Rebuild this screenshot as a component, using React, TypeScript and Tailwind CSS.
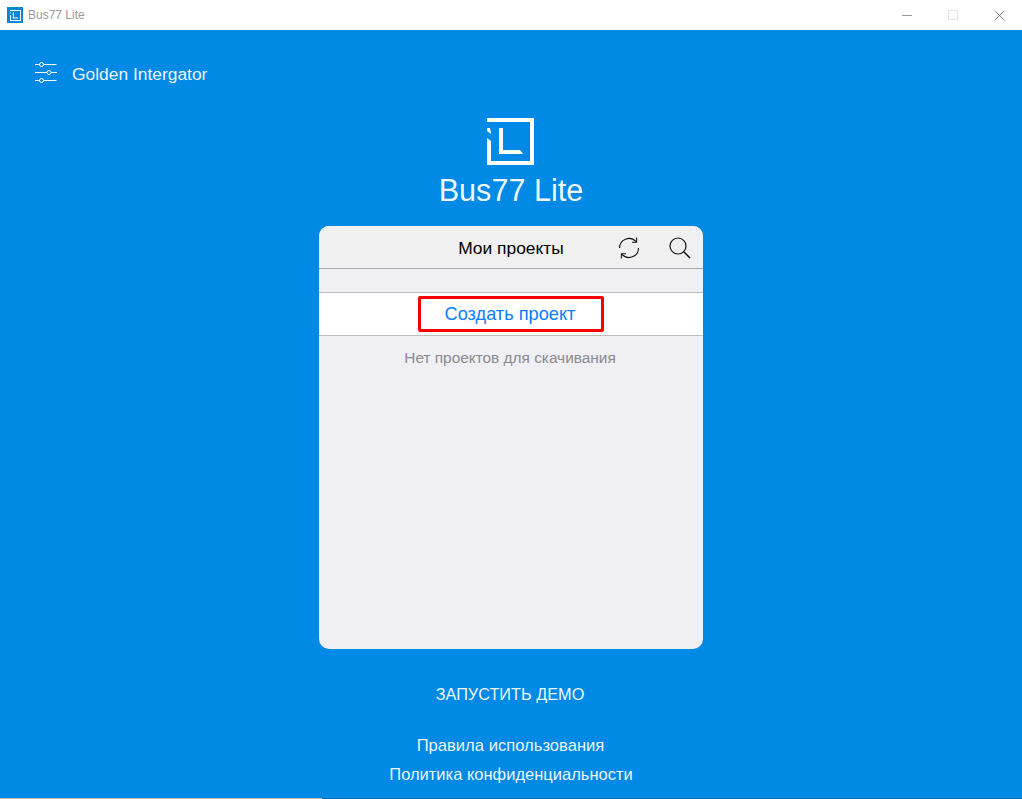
import React from 'react';

const sans = { fontFamily: '"Liberation Sans", Arial, sans-serif' };

// app mark: square outline, notched on the left, with the L inside
const Logo = ({ size }: { size: number }) => (
  <svg width={size} height={size} viewBox="0 0 47 47" fill="white">
    <path d="M0 0h47v47H0V20l4 3v20h39V4H0z" />
    <path d="M12 10h4v22h17l3 4H12z" />
    <path d="M0 10h3l1 5v1L0 13z" />
  </svg>
);

const Sliders = () => (
  <svg width="22" height="22" viewBox="0 0 22 22" fill="none" stroke="white" strokeWidth="1" className="overflow-visible">
    <path d="M0 1.5h4.5M8.5 1.5h13M0 9.5h12M16 9.5h6M0 17.5h4.5M8.5 17.5h13" />
    <circle cx="6.5" cy="1.5" r="2" />
    <circle cx="14" cy="9.5" r="2" />
    <circle cx="6.5" cy="17.5" r="2" />
  </svg>
);

const Refresh = () => (
  <svg width="22" height="24" viewBox="0 0 22 24" fill="none" stroke="#111" strokeWidth="1.1">
    <path d="M1.5 12A9.5 9.5 0 0 1 18 5.6" />
    <path d="M18.6 1.6v4.6h-4.6" />
    <path d="M20.5 12A9.5 9.5 0 0 1 4 18.4" />
    <path d="M3.4 22.4v-4.6h4.6" />
  </svg>
);

const Search = () => (
  <svg width="22" height="22" viewBox="0 0 22 22" fill="none" stroke="#111" strokeWidth="1.2">
    <circle cx="9" cy="9" r="8" />
    <path d="M14.8 14.8L21 21" strokeWidth="1.5" />
  </svg>
);

export default function App() {
  return (
    <div className="flex h-[799px] w-[1022px] flex-col overflow-hidden bg-[#008ae6]" style={sans}>
      {/* window title bar */}
      <div className="flex h-[30px] shrink-0 items-center justify-between bg-white pl-[7px]">
        <div className="flex items-center gap-[5px]">
          <div className="flex h-4 w-4 items-center justify-center bg-[#0a86d8]">
            <Logo size={11} />
          </div>
          <span className="text-xs text-[#9a9a9a]">Bus77 Lite</span>
        </div>
        <div className="flex items-center">
          <div className="flex h-[30px] w-[46px] items-center justify-center">
            <div className="h-px w-[10px] bg-[#999]" />
          </div>
          <div className="flex h-[30px] w-[46px] items-center justify-center">
            <div className="h-[10px] w-[10px] border border-[#e3e3e3]" />
          </div>
          <div className="flex h-[30px] w-[46px] items-center justify-center">
            <svg width="11" height="11" viewBox="0 0 11 11" stroke="#8a8a8a" strokeWidth="1">
              <path d="M0.5 0.5l10 10M10.5 0.5l-10 10" />
            </svg>
          </div>
        </div>
      </div>

      <div className="flex min-h-0 flex-1 flex-col">
        {/* account row */}
        <div className="mt-[33px] flex h-[22px] shrink-0 items-center gap-[15px] pl-[35px]">
          <Sliders />
          <span className="text-[17.4px] text-white/95">Golden Intergator</span>
        </div>

        <div className="mt-[33px] flex flex-col items-center">
          <div className="-translate-x-px">
            <Logo size={47} />
          </div>
          <div className="mt-[5px] text-[30.6px] leading-[40px] text-white/95">Bus77 Lite</div>

          {/* projects card */}
          <div className="mt-[16px] flex h-[423px] w-[384px] flex-col overflow-hidden rounded-[10px] bg-[#efeff4]">
            <div className="relative flex h-[43px] shrink-0 items-center justify-center border-b border-[#a9a9a9] bg-[#f0f0f0] pt-[3px] text-[17.4px] text-black">
              Мои проекты
              <div className="absolute right-[12px] top-[10px] flex items-center gap-[29px]">
                <Refresh />
                <Search />
              </div>
            </div>
            <div className="mt-[23px] flex h-[44px] shrink-0 items-center justify-center border-y border-[#bdbdbd] bg-white">
              <div className="flex h-[36px] w-[186px] items-center justify-center rounded-[2px] border-[3px] border-[#f70000] pr-[2px] pt-[2px] text-[18.2px] text-[#0a7cff]">
                Создать проект
              </div>
            </div>
            <div className="mt-[10px] pr-[2px] text-center text-[15.4px] text-[#8a8a8f]">Нет проектов для скачивания</div>
          </div>

          <div className="mt-[35px] pr-[2px] text-[16.3px] leading-5 text-white/95">ЗАПУСТИТЬ ДЕМО</div>
          <div className="mt-[32px] pr-[1px] text-[16.6px] leading-5 text-white/95">Правила использования</div>
          <div className="mt-[8px] text-[16.5px] leading-5 text-white/95">Политика конфиденциальности</div>
        </div>
      </div>

      {/* sliver of the desktop under the window */}
      <div className="flex h-px shrink-0">
        <div className="w-[322px] bg-[#b8b8b8]" />
        <div className="flex-1 bg-[#0b6cb0]" />
      </div>
    </div>
  );
}
